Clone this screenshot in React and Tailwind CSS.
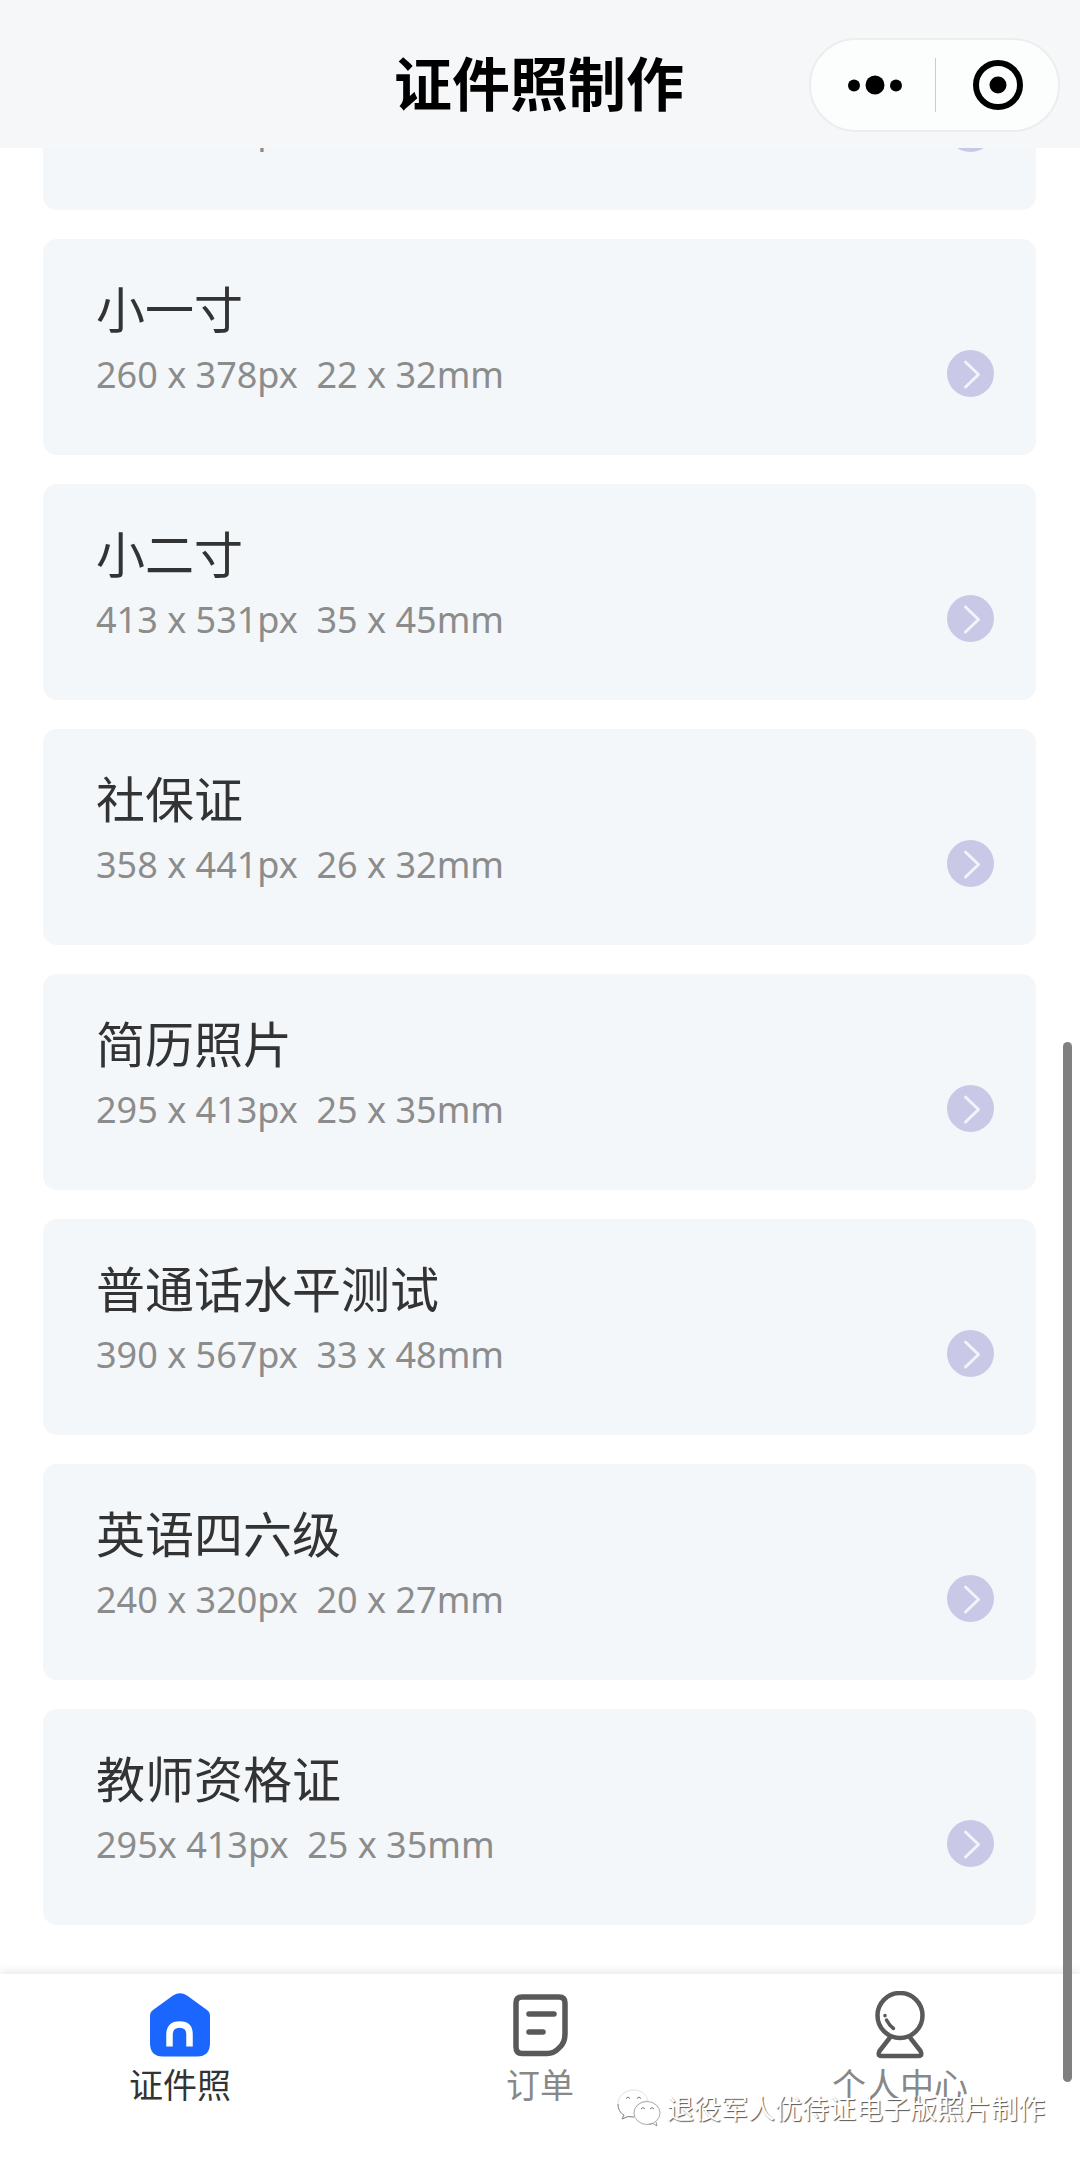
const sizes = [
  { name: "一寸", spec: "295 x 413px  25 x 35mm" },
  { name: "小一寸", spec: "260 x 378px  22 x 32mm" },
  { name: "小二寸", spec: "413 x 531px  35 x 45mm" },
  { name: "社保证", spec: "358 x 441px  26 x 32mm" },
  { name: "简历照片", spec: "295 x 413px  25 x 35mm" },
  { name: "普通话水平测试", spec: "390 x 567px  33 x 48mm" },
  { name: "英语四六级", spec: "240 x 320px  20 x 27mm" },
  { name: "教师资格证", spec: "295x 413px  25 x 35mm" },
];

function ArrowIcon() {
  return (
    <svg viewBox="0 0 47 47" className="size-[47px] shrink-0" fill="none" aria-hidden="true">
      <circle cx="23.5" cy="23.5" r="23.5" fill="#c9c9e7" />
      <path d="M18.5 12 L31.5 24.5 L18.5 37" stroke="#f1f4fa" strokeWidth="3" strokeLinecap="round" strokeLinejoin="round" />
    </svg>
  );
}

function HomeIcon() {
  return (
    <svg viewBox="0 0 60 64" className="h-16 w-[60px]" fill="none" aria-hidden="true">
      <path d="M23 2.500 Q30 -2 37 2.500 L57 17 Q60 19 60 23 V50 Q60 63.500 47 63.500 H13 Q0 63.500 0 50 V23 Q0 19 3 17 Z" fill="#1a66ff" />
      <path d="M19.500 53.500 V41 Q20 31.500 29.500 31.500 Q39.500 31.500 39.500 41 V53.500" stroke="#fff" strokeWidth="6.500" />
    </svg>
  );
}

function OrderIcon() {
  return (
    <svg viewBox="0 0 60 64" className="h-16 w-[60px]" fill="none" stroke="#595959" strokeWidth="5.500" strokeLinecap="round" aria-hidden="true">
      <path d="M12 4 H49 Q55 4 55 10 V41 Q55 50 49 55 Q44 60.500 37 60.500 H12 Q6 60.500 6 54 V10 Q6 4 12 4 Z" />
      <path d="M19 21 H44 M19 39 H33" />
    </svg>
  );
}

function ProfileIcon() {
  return (
    <svg viewBox="0 0 60 68" className="h-[68px] w-[60px]" fill="none" stroke="#595959" strokeWidth="4.500" strokeLinecap="round" strokeLinejoin="round" aria-hidden="true">
      <circle cx="30" cy="24.500" r="22.500" />
      <path d="M20 46.500 L9.500 60 Q7 65 11.500 65 H48.500 Q53 65 50.500 60 L40 46.500" />
      <path d="M15 24.500 V24.700 M16.500 29 Q19 34 23.500 37.500" strokeWidth="3.500" />
    </svg>
  );
}

function ChatIcon() {
  return (
    <svg viewBox="0 0 44 38" className="h-[38px] w-11" fill="none" aria-hidden="true">
      <path d="M17 1 C8 1 1 7 1 15 C1 20 3 24 7 26 L5 30 L11 27.500 Q14 28.500 17.500 28 C15 18 22 12 31 12 C30 6 24 1 17 1 Z" fill="#fff" stroke="#e2e2e2" strokeWidth="1" />
      <path d="M1 15 C1 20 3 24 7 26 L5 30 L11 27.500 L17 28" stroke="#888" strokeWidth="1" />
      <ellipse cx="30" cy="24" rx="13" ry="11.500" fill="#fff" stroke="#aaa" strokeWidth="1" />
      <path d="M32 35.500 L36 34.500 L40 37 L39 33" fill="#fff" stroke="#999" strokeWidth="1" />
      <path d="M9 9.500 Q11 6.500 13 9.500 M20 9.500 Q22 6.500 24 9.500 M24 20 Q26 17 28 20 M33 20 Q35 17 37 20" stroke="#777" strokeWidth="1" />
    </svg>
  );
}

const tabs = [
  { label: "证件照", Icon: HomeIcon, active: true },
  { label: "订单", Icon: OrderIcon },
  { label: "个人中心", Icon: ProfileIcon },
];

export default function App() {
  return (
    <div className="relative flex h-screen flex-col overflow-hidden bg-white font-['Noto_Sans_CJK_SC',sans-serif]">
      <header className="grid h-[148px] shrink-0 grid-cols-[1fr_auto_1fr] items-center bg-[#f6f7f9] pt-[22px] pr-5">
        <h1 className="col-start-2 pb-2 pl-[18px] text-[58px] leading-[80px] font-bold text-black">证件照制作</h1>
        <div className="flex h-[94px] w-[251px] items-center justify-self-end rounded-full border-2 border-[#ededee] bg-[#fcfefd]">
          <button type="button" aria-label="更多" className="flex flex-1 items-center justify-center pl-1">
            <svg viewBox="0 0 54 20" className="h-5 w-[54px]" aria-hidden="true">
              <circle cx="6" cy="10.500" r="6" />
              <circle cx="27" cy="10" r="9.500" />
              <circle cx="48" cy="10.500" r="6" />
            </svg>
          </button>
          <span className="h-[54px] w-px bg-[#cbcccc]" />
          <button type="button" aria-label="关闭" className="flex flex-1 items-center justify-center pl-0.5">
            <svg viewBox="0 0 52 52" className="size-[52px]" fill="none" aria-hidden="true">
              <circle cx="26" cy="26" r="22" stroke="#000" strokeWidth="6" />
              <circle cx="26" cy="26" r="8.500" fill="#000" />
            </svg>
          </button>
        </div>
      </header>

      <main className="flex min-h-0 flex-1 flex-col justify-end overflow-hidden">
        <ul className="flex shrink-0 flex-col gap-[29px] pr-11 pb-[49px] pl-[43px]">
          {sizes.map((s) => (
            <li key={s.name}>
              <button type="button" className="flex w-full flex-col rounded-[14px] bg-[#f3f7fa] pt-10 pr-[42px] pb-[58px] pl-[53px] text-left">
                <span className="text-[49px] leading-[56px] text-[#333]">{s.name}</span>
                <span className="mt-3.5 flex h-12 w-full items-center justify-between">
                  <span className="pt-1 font-['Noto_Sans',sans-serif] text-[36px] leading-[48px] whitespace-pre text-[#8c8c8c]">{s.spec}</span>
                  <ArrowIcon />
                </span>
              </button>
            </li>
          ))}
        </ul>
      </main>

      <nav className="grid shrink-0 grid-cols-3 bg-white pt-4 pb-12 shadow-[0_-2px_10px_rgba(0,0,0,0.1)]">
        {tabs.map(({ label, Icon, active }) => (
          <button key={label} type="button" className="flex flex-col items-center">
            <span className="flex h-[69px] items-center">
              <Icon />
            </span>
            <span className={active ? "text-[34px] leading-[50px] text-[#333]" : "text-[34px] leading-[50px] text-[#888]"}>{label}</span>
          </button>
        ))}
      </nav>

      <div className="absolute right-2 bottom-[75px] h-[1040px] w-[9px] rounded-full bg-[#808080]" />

      <div className="pointer-events-none absolute right-[35px] bottom-[29px] flex items-center gap-1.5">
        <ChatIcon />
        <span className="text-[27px] leading-10 text-white [text-shadow:1px_1px_1px_#555]">退役军人优待证电子版照片制作</span>
      </div>
    </div>
  );
}
